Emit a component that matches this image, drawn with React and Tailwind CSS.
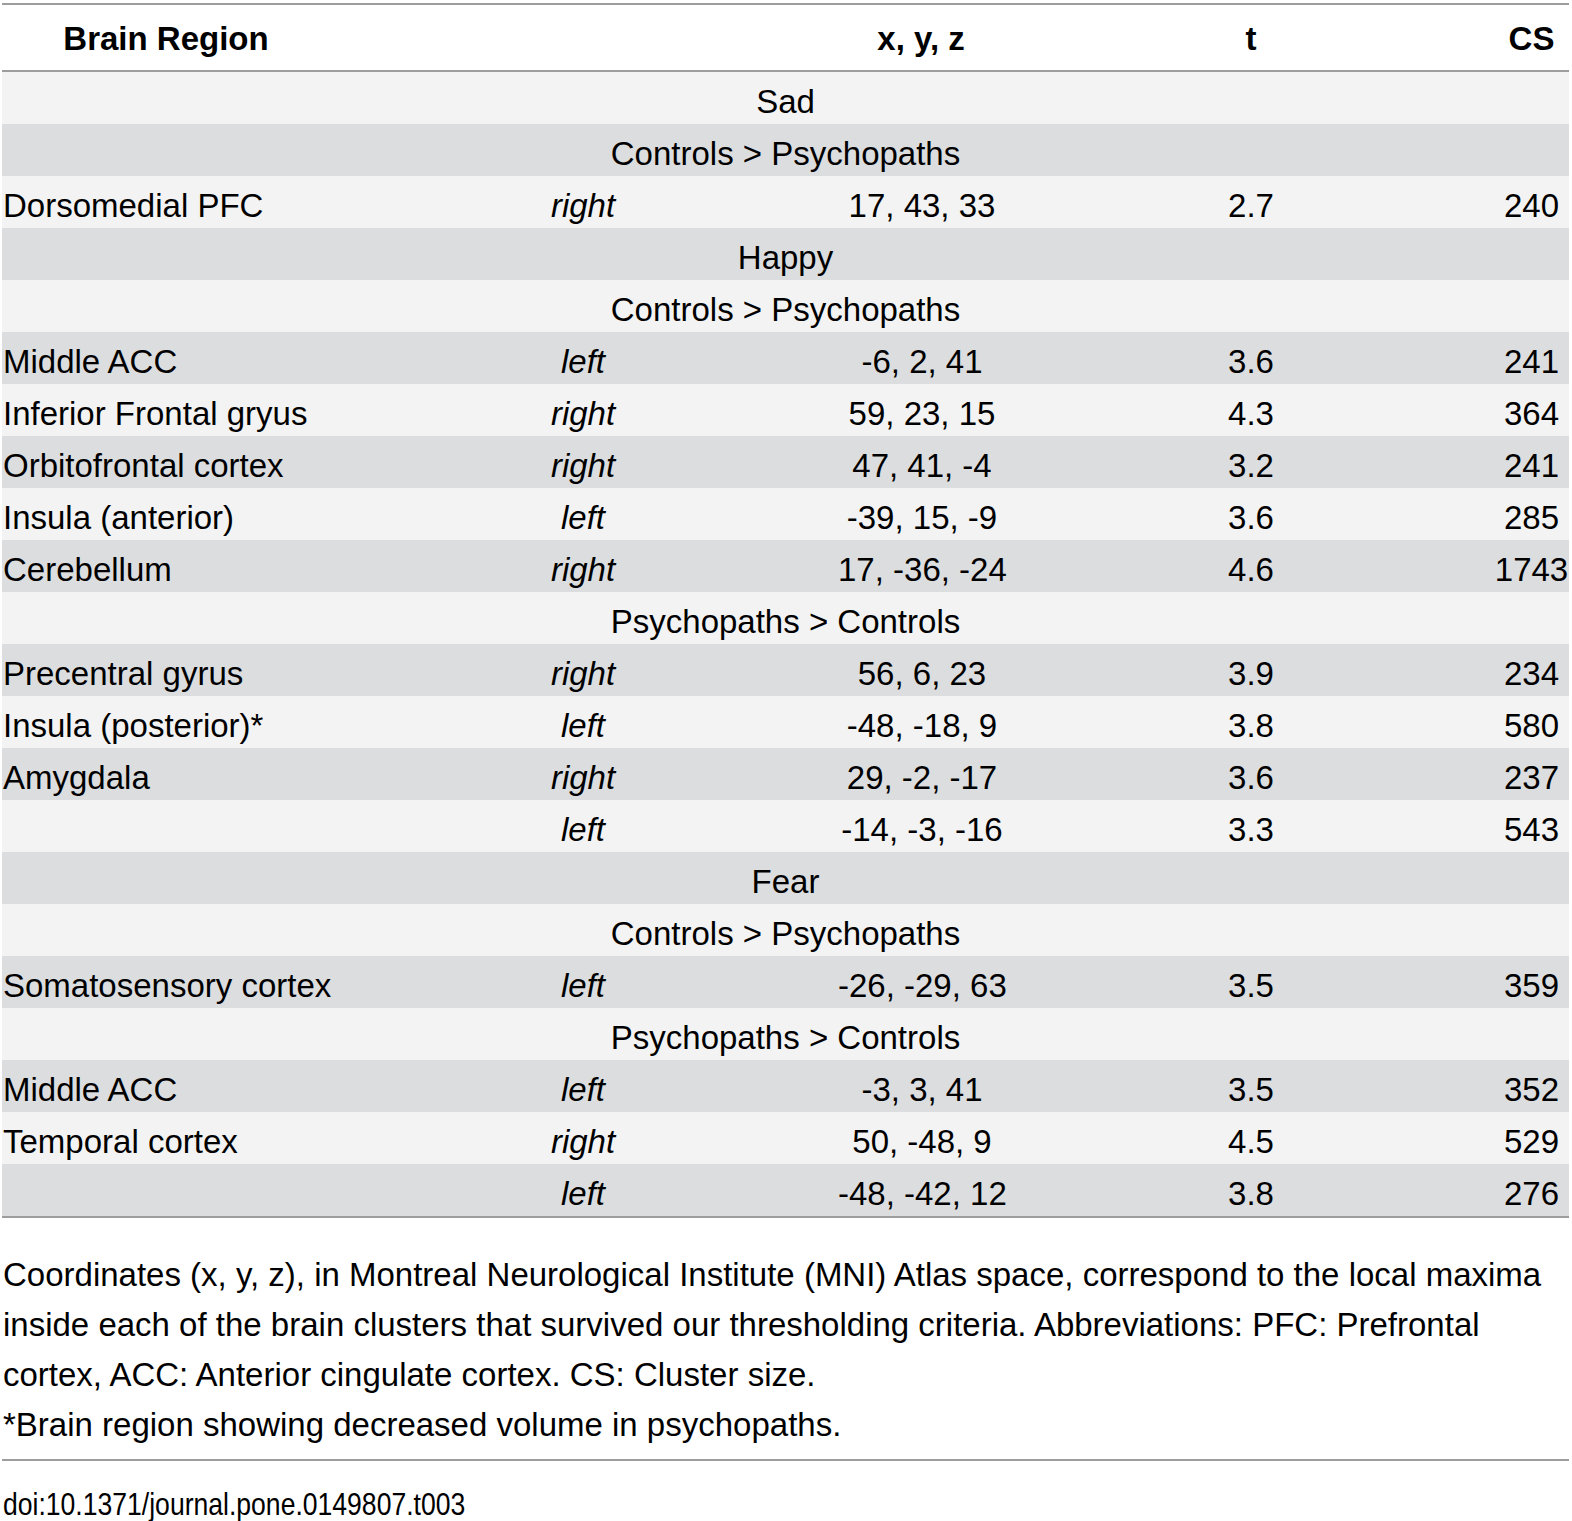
const rows = [
  { group: "Sad" },
  { group: "Controls > Psychopaths" },
  { region: "Dorsomedial PFC", side: "right", xyz: "17, 43, 33", t: "2.7", cs: "240" },
  { group: "Happy" },
  { group: "Controls > Psychopaths" },
  { region: "Middle ACC", side: "left", xyz: "-6, 2, 41", t: "3.6", cs: "241" },
  { region: "Inferior Frontal gryus", side: "right", xyz: "59, 23, 15", t: "4.3", cs: "364" },
  { region: "Orbitofrontal cortex", side: "right", xyz: "47, 41, -4", t: "3.2", cs: "241" },
  { region: "Insula (anterior)", side: "left", xyz: "-39, 15, -9", t: "3.6", cs: "285" },
  { region: "Cerebellum", side: "right", xyz: "17, -36, -24", t: "4.6", cs: "1743" },
  { group: "Psychopaths > Controls" },
  { region: "Precentral gyrus", side: "right", xyz: "56, 6, 23", t: "3.9", cs: "234" },
  { region: "Insula (posterior)*", side: "left", xyz: "-48, -18, 9", t: "3.8", cs: "580" },
  { region: "Amygdala", side: "right", xyz: "29, -2, -17", t: "3.6", cs: "237" },
  { region: "", side: "left", xyz: "-14, -3, -16", t: "3.3", cs: "543" },
  { group: "Fear" },
  { group: "Controls > Psychopaths" },
  { region: "Somatosensory cortex", side: "left", xyz: "-26, -29, 63", t: "3.5", cs: "359" },
  { group: "Psychopaths > Controls" },
  { region: "Middle ACC", side: "left", xyz: "-3, 3, 41", t: "3.5", cs: "352" },
  { region: "Temporal cortex", side: "right", xyz: "50, -48, 9", t: "4.5", cs: "529" },
  { region: "", side: "left", xyz: "-48, -42, 12", t: "3.8", cs: "276" },
];

function App() {
  return (
    <div className="bg-white w-[1572px] h-[1521px] pt-[3px] font-['Liberation_Sans',Arial,sans-serif] text-[33px] text-black overflow-hidden">
      <div className="ml-[2px] w-[1567px]">
        <div className="flex h-[69px] items-center border-t-2 border-b-2 border-[#9d9d9d] font-bold pt-[2px]">
          <div className="w-[328px] text-center">Brain Region</div>
          <div className="w-[506px]"></div>
          <div className="w-[170px] text-center whitespace-nowrap">x, y, z</div>
          <div className="w-[484px] text-center pl-[6px]">t</div>
          <div className="w-[79px] text-center pl-[4px]">CS</div>
        </div>
        {rows.map((r, i) => (
          <div
            key={i}
            className={
              "flex h-[52px] items-center pt-[7px] whitespace-nowrap " +
              (i % 2 === 0 ? "bg-[#f3f3f3]" : "bg-[#dcdddf]")
            }
          >
            {r.group ? (
              <div className="w-full text-center">{r.group}</div>
            ) : (
              <>
                <div className="w-[328px] pl-[1px]">{r.region}</div>
                <div className="w-[506px] text-center italic">{r.side}</div>
                <div className="w-[170px] text-center pl-[2px]">{r.xyz}</div>
                <div className="w-[484px] text-center pl-[6px]">{r.t}</div>
                <div className="w-[79px] text-center pl-[4px]">{r.cs}</div>
              </>
            )}
          </div>
        ))}
        <div className="border-t-2 border-[#9d9d9d]"></div>
      </div>
      <div className="ml-[3px] mt-[32px] w-[1566px] leading-[50px]">
        <p>
          Coordinates (x, y, z), in Montreal Neurological Institute (MNI) Atlas space, correspond to the local maxima inside each of the brain clusters that survived our thresholding criteria. Abbreviations: PFC: Prefrontal cortex, ACC: Anterior cingulate cortex. CS: Cluster size.
        </p>
        <p>*Brain region showing decreased volume in psychopaths.</p>
      </div>
      <div className="ml-[2px] w-[1567px] mt-[9px] border-t-2 border-[#9d9d9d]"></div>
      <div className="ml-[3px] mt-[23px] leading-[40px] text-[32px]">
        <span className="inline-block origin-left scale-x-[0.83] whitespace-nowrap">doi:10.1371/journal.pone.0149807.t003</span>
      </div>
    </div>
  );
}

export default App;
